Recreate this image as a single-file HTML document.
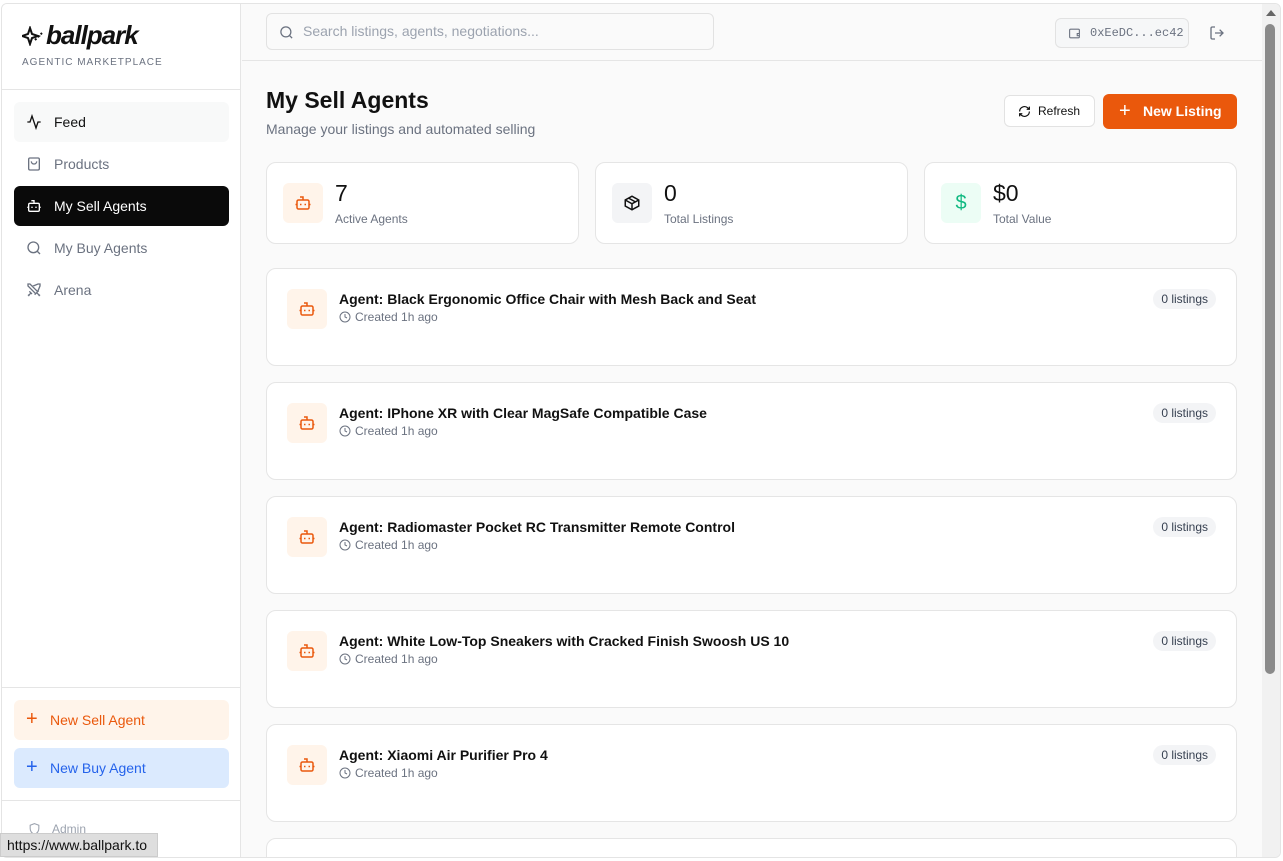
<!DOCTYPE html>
<html><head><meta charset="utf-8"><style>
*{box-sizing:border-box;margin:0;padding:0}
body{width:1283px;height:861px;overflow:hidden;background:#fff;font-family:"Liberation Sans",sans-serif;position:relative}
.frame{position:absolute;left:1px;top:3px;width:1280px;height:855px;border:1px solid #e4e4e4;border-radius:6px;overflow:hidden;background:#fafafa}
.side{position:absolute;left:0;top:0;width:239px;height:100%;background:#fff;border-right:1px solid #e5e5e5}
.logo{position:absolute;left:20px;top:16px;font-size:26px;font-weight:bold;font-style:italic;letter-spacing:-1px;color:#111}
.tag{position:absolute;left:20px;top:53px;font-size:10px;letter-spacing:1px;color:#6b7280}
.hr{position:absolute;left:0;width:239px;border-top:1px solid #e5e5e5}
.nav{position:absolute;left:12px;width:215px;height:40px;border-radius:6px;font-size:14px;color:#6b7280;display:flex;align-items:center;padding-left:40px}
.nav svg{position:absolute;left:12px;top:12px}
.btn{position:absolute;left:12px;width:215px;height:40px;border-radius:6px;font-size:14px;display:flex;align-items:center;padding-left:36px}
.btn span{position:absolute;left:12px;top:9px;font-size:20px;line-height:20px}
.main{position:absolute;left:240px;top:0;right:18px;height:100%}
.top{position:absolute;left:0;top:0;right:0;height:57px;border-bottom:1px solid #e5e5e5;background:#fafafa}
.search{position:absolute;left:24px;top:9px;width:448px;height:37px;border:1px solid #e2e2e2;border-radius:6px;background:#fafafa;font-size:14px;color:#9ca3af;padding-left:36px;line-height:35px}
.wallet{position:absolute;left:813px;top:14px;width:134px;height:30px;border:1px solid #e2e2e2;border-radius:6px;background:#f6f7f8;font-family:"Liberation Mono",monospace;font-size:12px;color:#6b7280;padding-left:34px;line-height:28px}
h1{position:absolute;left:24px;top:83px;font-size:23px;color:#111}
.sub{position:absolute;left:24px;top:117px;font-size:14px;color:#6b7280}
.stat{position:absolute;top:158px;width:313px;height:82px;background:#fff;border:1px solid #e5e5e5;border-radius:10px}
.ic{position:absolute;width:40px;height:40px;border-radius:6px;display:flex;align-items:center;justify-content:center}
.stat .ic{left:16px;top:20px}
.stat .n{position:absolute;left:68px;top:17px;font-size:23px;color:#111}
.stat .l{position:absolute;left:68px;top:49px;font-size:12px;color:#6b7280}
.card{position:absolute;left:24px;width:971px;height:98px;background:#fff;border:1px solid #e5e5e5;border-radius:10px}
.card .ic{left:20px;top:20px;background:#fff4ea}
.card .t{position:absolute;left:72px;top:22px;font-size:14px;font-weight:bold;color:#111}
.card .c{position:absolute;left:72px;top:41px;font-size:12px;color:#6b7280;padding-left:16px}
.card .c svg{position:absolute;left:0;top:1px}
.pill{position:absolute;right:20px;top:20px;background:#f3f4f6;border-radius:10px;font-size:12px;color:#374151;padding:3px 8px}
.sb{position:absolute;right:0;top:0;width:18px;height:100%;background:#f1f1f1}
</style></head><body>
<div class="frame">
<div class="side">
<div class="logo"><svg width="22" height="20" viewBox="0 0 22 20" style="vertical-align:-2px;margin-right:2px"><path d="M8 2 L10 8 L16 10 L10 12 L8 18 L6 12 L0 10 L6 8Z" fill="none" stroke="#111" stroke-width="2"/><path d="M13 14 L20 7" stroke="#111" stroke-width="2" stroke-dasharray="2 2"/></svg>ballpark</div>
<div class="tag">AGENTIC MARKETPLACE</div>
<div class="hr" style="top:85px"></div>
<div class="nav" style="top:98px;background:#f8f9f9;color:#111"><svg width="16" height="16" viewBox="0 0 24 24" fill="none" stroke="#111" stroke-width="2"><path d="M22 12h-4l-3 9L9 3l-3 9H2"/></svg>Feed</div>
<div class="nav" style="top:140px"><svg width="16" height="16" viewBox="0 0 24 24" fill="none" stroke="#6b7280" stroke-width="2"><rect x="4" y="3" width="16" height="18" rx="2"/><path d="M8 8a4 4 0 0 0 8 0"/></svg>Products</div>
<div class="nav" style="top:182px;background:#0a0a0a;color:#fff"><svg width="16" height="16" viewBox="0 0 24 24" fill="none" stroke="#fff" stroke-width="2"><rect x="4" y="8" width="16" height="12" rx="2"/><path d="M12 8V4H8M2 14h2M20 14h2M9 13v2M15 13v2"/></svg>My Sell Agents</div>
<div class="nav" style="top:224px"><svg width="16" height="16" viewBox="0 0 24 24" fill="none" stroke="#6b7280" stroke-width="2"><circle cx="11" cy="11" r="8"/><path d="M21 21l-4.3-4.3"/></svg>My Buy Agents</div>
<div class="nav" style="top:266px"><svg width="16" height="16" viewBox="0 0 24 24" fill="none" stroke="#6b7280" stroke-width="2"><path d="M14.5 17.5L3 6V3h3l11.5 11.5M13 19l6-6M16 16l4 4M19 21l2-2M9.5 6.5L18 3h3v3l-3.5 8.5M5 14l4 4M7 17l-3 3M3 19l2 2"/></svg>Arena</div>
<div class="hr" style="top:683px"></div>
<div class="btn" style="top:696px;background:#fff4ea;color:#ea580c"><span>+</span>New Sell Agent</div>
<div class="btn" style="top:744px;background:#dbeafe;color:#2563eb"><span>+</span>New Buy Agent</div>
<div class="hr" style="top:796px"></div>
<svg style="position:absolute;left:26px;top:818px" width="13" height="14" viewBox="0 0 24 24" fill="none" stroke="#9ca3af" stroke-width="2"><path d="M12 2l8 3v6c0 5-3.5 9-8 11-4.5-2-8-6-8-11V5z"/></svg>
<div style="position:absolute;left:50px;top:818px;font-size:12px;color:#9ca3af">Admin</div>
</div>
<div class="main">
<div class="top">
<div class="search"><svg style="position:absolute;left:12px;top:11px" width="15" height="15" viewBox="0 0 24 24" fill="none" stroke="#6b7280" stroke-width="2"><circle cx="11" cy="11" r="8"/><path d="M21 21l-4.3-4.3"/></svg>Search listings, agents, negotiations...</div>
<div class="wallet"><svg style="position:absolute;left:12px;top:8px" width="13" height="13" viewBox="0 0 24 24" fill="none" stroke="#6b7280" stroke-width="2"><rect x="3" y="4" width="18" height="16" rx="2"/><path d="M21 12h-4v4h4"/></svg>0xEeDC...ec42</div>
<svg style="position:absolute;left:967px;top:21px" width="16" height="16" viewBox="0 0 24 24" fill="none" stroke="#6b7280" stroke-width="2"><path d="M9 21H5a2 2 0 0 1-2-2V5a2 2 0 0 1 2-2h4M16 17l5-5-5-5M21 12H9"/></svg>
</div>
<h1>My Sell Agents</h1>
<div class="sub">Manage your listings and automated selling</div>
<div style="position:absolute;left:762px;top:91px;width:91px;height:32px;background:#fff;border:1px solid #e2e2e2;border-radius:6px;font-size:12px;color:#111;line-height:30px;padding-left:33px"><svg style="position:absolute;left:13px;top:9px" width="13" height="13" viewBox="0 0 24 24" fill="none" stroke="#111" stroke-width="2.2"><path d="M3 12a9 9 0 0 1 15-6.7L21 8M21 3v5h-5M21 12a9 9 0 0 1-15 6.7L3 16M3 21v-5h5"/></svg>Refresh</div>
<div style="position:absolute;left:861px;top:90px;width:134px;height:35px;background:#ea580c;border-radius:6px;font-size:14px;font-weight:bold;color:#fff;line-height:35px;padding-left:40px"><span style="position:absolute;left:16px;font-size:20px;font-weight:normal">+</span>New Listing</div>
<div class="stat" style="left:24px"><div class="ic" style="background:#fff4ea"><svg width="18" height="18" viewBox="0 0 24 24" fill="none" stroke="#ea580c" stroke-width="2"><rect x="4" y="8" width="16" height="12" rx="2"/><path d="M12 8V4H8M2 14h2M20 14h2M9 13v2M15 13v2"/></svg></div><div class="n">7</div><div class="l">Active Agents</div></div>
<div class="stat" style="left:353px"><div class="ic" style="background:#f3f4f6"><svg width="18" height="18" viewBox="0 0 24 24" fill="none" stroke="#111" stroke-width="2"><path d="M21 8l-9-5-9 5v8l9 5 9-5z"/><path d="M3 8l9 5 9-5M12 13v8M7.5 5.5l9 5"/></svg></div><div class="n">0</div><div class="l">Total Listings</div></div>
<div class="stat" style="left:682px"><div class="ic" style="background:#ecfdf5;color:#10b981;font-size:20px">$</div><div class="n">$0</div><div class="l">Total Value</div></div>
<div class="card" style="top:264px"><div class="ic"><svg width="18" height="18" viewBox="0 0 24 24" fill="none" stroke="#ea580c" stroke-width="2"><rect x="4" y="8" width="16" height="12" rx="2"/><path d="M12 8V4H8M2 14h2M20 14h2M9 13v2M15 13v2"/></svg></div><div class="t">Agent: Black Ergonomic Office Chair with Mesh Back and Seat</div><div class="c"><svg width="12" height="12" viewBox="0 0 24 24" fill="none" stroke="#6b7280" stroke-width="2"><circle cx="12" cy="12" r="10"/><path d="M12 6v6l4 2"/></svg>Created 1h ago</div><div class="pill">0 listings</div></div>
<div class="card" style="top:378px"><div class="ic"><svg width="18" height="18" viewBox="0 0 24 24" fill="none" stroke="#ea580c" stroke-width="2"><rect x="4" y="8" width="16" height="12" rx="2"/><path d="M12 8V4H8M2 14h2M20 14h2M9 13v2M15 13v2"/></svg></div><div class="t">Agent: IPhone XR with Clear MagSafe Compatible Case</div><div class="c"><svg width="12" height="12" viewBox="0 0 24 24" fill="none" stroke="#6b7280" stroke-width="2"><circle cx="12" cy="12" r="10"/><path d="M12 6v6l4 2"/></svg>Created 1h ago</div><div class="pill">0 listings</div></div>
<div class="card" style="top:492px"><div class="ic"><svg width="18" height="18" viewBox="0 0 24 24" fill="none" stroke="#ea580c" stroke-width="2"><rect x="4" y="8" width="16" height="12" rx="2"/><path d="M12 8V4H8M2 14h2M20 14h2M9 13v2M15 13v2"/></svg></div><div class="t">Agent: Radiomaster Pocket RC Transmitter Remote Control</div><div class="c"><svg width="12" height="12" viewBox="0 0 24 24" fill="none" stroke="#6b7280" stroke-width="2"><circle cx="12" cy="12" r="10"/><path d="M12 6v6l4 2"/></svg>Created 1h ago</div><div class="pill">0 listings</div></div>
<div class="card" style="top:606px"><div class="ic"><svg width="18" height="18" viewBox="0 0 24 24" fill="none" stroke="#ea580c" stroke-width="2"><rect x="4" y="8" width="16" height="12" rx="2"/><path d="M12 8V4H8M2 14h2M20 14h2M9 13v2M15 13v2"/></svg></div><div class="t">Agent: White Low-Top Sneakers with Cracked Finish Swoosh US 10</div><div class="c"><svg width="12" height="12" viewBox="0 0 24 24" fill="none" stroke="#6b7280" stroke-width="2"><circle cx="12" cy="12" r="10"/><path d="M12 6v6l4 2"/></svg>Created 1h ago</div><div class="pill">0 listings</div></div>
<div class="card" style="top:720px"><div class="ic"><svg width="18" height="18" viewBox="0 0 24 24" fill="none" stroke="#ea580c" stroke-width="2"><rect x="4" y="8" width="16" height="12" rx="2"/><path d="M12 8V4H8M2 14h2M20 14h2M9 13v2M15 13v2"/></svg></div><div class="t">Agent: Xiaomi Air Purifier Pro 4</div><div class="c"><svg width="12" height="12" viewBox="0 0 24 24" fill="none" stroke="#6b7280" stroke-width="2"><circle cx="12" cy="12" r="10"/><path d="M12 6v6l4 2"/></svg>Created 1h ago</div><div class="pill">0 listings</div></div>
<div class="card" style="top:834px"></div>
</div>
<div class="sb"><div style="position:absolute;left:4px;top:6px;width:0;height:0;border-left:5px solid transparent;border-right:5px solid transparent;border-bottom:6px solid #666"></div><div style="position:absolute;left:3px;top:20px;width:10px;height:650px;background:#8a8a8a;border-radius:5px"></div></div>
</div>
<div style="position:absolute;left:0;top:833px;width:158px;height:24px;background:#dedede;border:1px solid #ccc;font-size:14px;color:#111;padding:3px 6px">https://www.ballpark.to</div>
</body></html>
